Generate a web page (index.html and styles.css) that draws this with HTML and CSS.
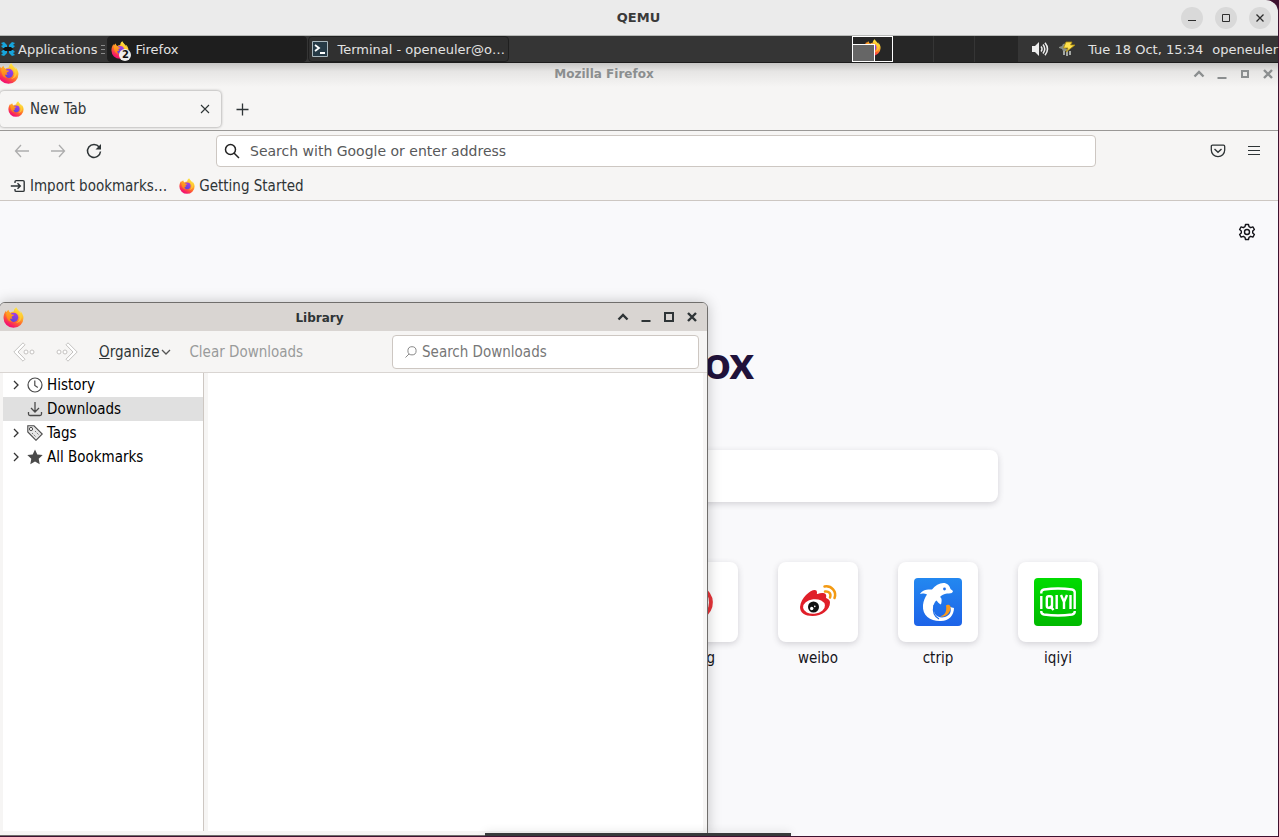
FILE: index.html
```html
<!DOCTYPE html>
<html lang="en">
<head>
<meta charset="utf-8">
<title>QEMU</title>
<link rel="stylesheet" href="styles.css">
</head>
<body>
<svg class="defs" aria-hidden="true">
  <defs>
    <linearGradient id="flame" x1="0.85" y1="0.05" x2="0.3" y2="1">
      <stop offset="0" stop-color="#fff44f"/><stop offset="0.3" stop-color="#ffc02a"/>
      <stop offset="0.6" stop-color="#ff6a2c"/><stop offset="0.9" stop-color="#f5156c"/>
    </linearGradient>
    <linearGradient id="globe" x1="0.7" y1="0" x2="0.3" y2="1">
      <stop offset="0" stop-color="#a83be8"/><stop offset="1" stop-color="#5a45d8"/>
    </linearGradient>
    <linearGradient id="ear" x1="0" y1="0" x2="0" y2="1">
      <stop offset="0" stop-color="#ffa51f"/><stop offset="1" stop-color="#ff7a1c"/>
    </linearGradient>
    <linearGradient id="blue" x1="0" y1="0" x2="0" y2="1">
      <stop offset="0" stop-color="#2388f0"/><stop offset="1" stop-color="#1d63e8"/>
    </linearGradient>
    <linearGradient id="green" x1="0" y1="0" x2="0" y2="1">
      <stop offset="0" stop-color="#00dc00"/><stop offset="1" stop-color="#00b900"/>
    </linearGradient>
    <symbol id="fox" viewBox="0 0 24 24">
      <path fill="url(#flame)" d="M22.3 8.2C21.7 6.7 20.4 5.300 19.500 4.700C20.200 6 20.500 7 20.600 7.800C19 4.400 16.400 3.500 15.200.4C13.200 1.700 12.300 3.800 12.300 5.200C10.600 5.300 9.400 5.900 8.600 6.600C7.500 6.200 6.700 5 6.300 3.200C5.300 3.800 4.500 4.800 4 5.900C3.600 5.500 3.500 4.600 3.500 4C1.500 6.500.6 9.600.6 12.600A11.400 11.200 0 0 0 23.400 12.600C23.500 11 23 9.500 22.300 8.200Z"/>
      <circle cx="12.200" cy="11.800" r="5.200" fill="url(#globe)"/>
      <path fill="url(#ear)" d="M3.800 6.200C5.700 6 7.400 6.200 8.600 7C9.300 8.500 10.800 8.400 12.600 8.800C12.400 10.200 10.200 10.200 9.900 11.100C9.700 12 10.300 12.700 11 12.900C9.800 13.700 8.600 13.600 8 13.200C8.200 14.800 9 15.900 10.500 16.800C7.500 17 5.800 15.600 5.300 14C4 11.500 3.500 9 3.800 6.200Z"/>
      <path fill="#ffd33a" fill-opacity=".75" d="M15.200 1C15.400 5 18.600 6.500 19 11C19.300 15 16.700 17.500 14.500 18.200C20 18 22.800 12.800 20.600 8C19 5.300 16.800 4 15.200 1Z"/>
    </symbol>
    <symbol id="shade" viewBox="0 0 12 12"><path d="M1.500 8.500 6 4l4.500 4.500" fill="none" stroke="currentColor" stroke-width="2.400"/></symbol>
    <symbol id="min" viewBox="0 0 12 12"><path d="M1.500 10h9" stroke="currentColor" stroke-width="2"/></symbol>
    <symbol id="max" viewBox="0 0 12 12"><path d="M2 2h8v8H2z" fill="none" stroke="currentColor" stroke-width="2"/></symbol>
    <symbol id="close" viewBox="0 0 12 12"><path d="M2 2l8 8M10 2l-8 8" stroke="currentColor" stroke-width="2.400"/></symbol>
    <symbol id="chev" viewBox="0 0 10 10"><path d="M3 1l4 4-4 4" fill="none" stroke="currentColor" stroke-width="1.300"/></symbol>
  </defs>
</svg>

<main class="vm">
  <header class="vm-title">
    <h1>QEMU</h1>
    <div class="vm-buttons">
      <button aria-label="Minimize"><svg viewBox="0 0 22 22"><path d="M7 13.500h8" stroke="#2e2e2e"/></svg></button>
      <button aria-label="Maximize"><svg viewBox="0 0 22 22"><path d="M7.500 7.500h7v7h-7z" fill="none" stroke="#2e2e2e"/></svg></button>
      <button aria-label="Close"><svg viewBox="0 0 22 22"><path d="M7.500 7.500l7 7M14.500 7.500l-7 7" stroke="#2e2e2e" stroke-width="1.300"/></svg></button>
    </div>
  </header>

  <nav class="panel" aria-label="Panel">
    <button class="apps">
      <svg width="16" height="16" viewBox="0 0 16 16"><path fill="#16a5dc" d="M1 2l3-1 3 3v3H3L1 5l2-1zM15 2l-3-1-3 3v3h4l2-2-2-1zM1 14l3 1 3-3V9H3l-2 2 2 1zM15 14l-3 1-3-3V9h4l2 2-2 1z"/><path fill="#111" d="M5 6h6l2 2-2 2H5L3 8z"/></svg>
      <span>Applications</span>
    </button>
    <svg class="grip" width="4" height="9" viewBox="0 0 4 9"><path d="M0 .5h4M0 4.500h4M0 8.500h4" stroke="#8a8a8a"/></svg>
    <button class="task task-active">
      <span class="task-icon"><svg width="18" height="18"><use href="#fox"/></svg><b class="count">2</b></span>
      <span>Firefox</span>
    </button>
    <button class="task">
      <svg width="16" height="16" viewBox="0 0 16 16"><path d="M.5.500h15v15H.5z" fill="#263a46" stroke="#a9b7bd"/><path d="M3 4l4 3-4 3M8 12h5" fill="none" stroke="#fff" stroke-width="1.800"/></svg>
      <span>Terminal - openeuler@o…</span>
    </button>
    <div class="pager">
      <button class="cell cell-on" aria-label="Workspace 1">
        <svg class="cell-fox" width="17" height="17"><use href="#fox"/></svg>
        <span class="mini"></span>
      </button>
      <button class="cell" aria-label="Workspace 2"></button>
      <button class="cell" aria-label="Workspace 3"></button>
      <button class="cell" aria-label="Workspace 4"></button>
    </div>
    <div class="tray">
      <svg width="18" height="16" viewBox="0 0 18 16"><path fill="#eee" d="M1 5h3l4-4v14l-4-4H1z"/><path d="M10 5.500q2 2.500 0 5M12 3.500q3.500 4.500 0 9M14 1.800q5 6.200 0 12.400" fill="none" stroke="#eee" stroke-width="1.500"/></svg>
      <svg width="18" height="16" viewBox="0 0 18 16"><path d="M1 6l3-1 1-2 4-1-2 5 2 1v2H5L4 8 1 7z" fill="#8a9088"/><path d="M6 10v4M9 10v5M12 10v4" stroke="#c9cdc7" stroke-width="1.500"/><path d="M8 1h6l-1.500 3H17l-9 7 2-4H5.500z" fill="#ffe14d" stroke="#a98a10" stroke-width=".8"/></svg>
      <time>Tue 18 Oct, 15:34</time>
      <span class="user">openeuler</span>
    </div>
  </nav>

  <section class="desktop">
    <section class="browser" aria-label="Mozilla Firefox">
      <header class="browser-title">
        <svg class="browser-fox" width="21" height="21"><use href="#fox"/></svg>
        <h2>Mozilla Firefox</h2>
        <div class="win-buttons">
          <button aria-label="Shade"><svg><use href="#shade"/></svg></button>
          <button aria-label="Minimize"><svg><use href="#min"/></svg></button>
          <button aria-label="Maximize"><svg viewBox="0 0 12 12"><path d="M3 3h6v6H3z" fill="none" stroke="currentColor" stroke-width="2"/></svg></button>
          <button aria-label="Close"><svg><use href="#close"/></svg></button>
        </div>
      </header>
      <div class="tabs">
        <div class="tab">
          <svg width="16" height="16"><use href="#fox"/></svg>
          <span>New Tab</span>
          <button aria-label="Close tab"><svg width="10" height="10" viewBox="0 0 10 10"><path d="M1 1l8 8M9 1l-8 8" stroke="#2e3436" stroke-width="1.100"/></svg></button>
        </div>
        <button class="new-tab" aria-label="New tab"><svg width="13" height="13" viewBox="0 0 13 13"><path d="M6.500.5v12M.5 6.500h12" stroke="#2e3436" stroke-width="1.300"/></svg></button>
      </div>
      <div class="nav">
        <div class="nav-buttons">
          <button aria-label="Back" disabled><svg width="16" height="16" viewBox="0 0 16 16"><path d="M7 2L1.500 8 7 14M1.500 8H15" fill="none" stroke="#adadad" stroke-width="1.300"/></svg></button>
          <button aria-label="Forward" disabled><svg width="16" height="16" viewBox="0 0 16 16"><path d="M9 2l5.500 6L9 14M14.500 8H1" fill="none" stroke="#adadad" stroke-width="1.300"/></svg></button>
          <button aria-label="Reload"><svg width="16" height="16" viewBox="0 0 16 16"><path d="M13.200 4A6.500 6.500 0 1 0 14.500 8.500" fill="none" stroke="#2e3436" stroke-width="1.500"/><path d="M15 1v5.500H9.500z" fill="#2e3436"/></svg></button>
        </div>
        <label class="url">
          <svg width="16" height="16" viewBox="0 0 16 16"><circle cx="6.500" cy="6.500" r="5" fill="none" stroke="#222" stroke-width="1.500"/><path d="M10 10l5 5" stroke="#222" stroke-width="1.500"/></svg>
          <input type="text" aria-label="Address" placeholder="Search with Google or enter address">
        </label>
        <div class="nav-tools">
          <button aria-label="Save to Pocket"><svg width="16" height="16" viewBox="0 0 16 16"><path d="M2.500 2.200h11q1.200 0 1.200 1.200V7A6.700 6.700 0 0 1 1.300 7V3.400q0-1.200 1.200-1.200z" fill="none" stroke="#2e3436" stroke-width="1.300"/><path d="M4.500 6L8 9.300 11.500 6" fill="none" stroke="#2e3436" stroke-width="1.400"/></svg></button>
          <button aria-label="Menu"><svg width="16" height="16" viewBox="0 0 16 16"><path d="M2 3.500h12M2 7.500h12M2 11.500h12" stroke="#2e3436" stroke-width="1.200"/></svg></button>
        </div>
      </div>
      <div class="bookmarks">
        <a href="#import"><svg width="16" height="16" viewBox="0 0 16 16"><path d="M5 5V3.800q0-1.200 1.200-1.200h6.800q1.200 0 1.200 1.200v8.400q0 1.200-1.200 1.200H6.200Q5 13.400 5 12.200V11M.8 8H10M7.500 5.200L10.300 8 7.500 10.800" fill="none" stroke="#2e3436" stroke-width="1.400"/></svg>Import bookmarks…</a>
        <a href="#start"><svg width="16" height="16"><use href="#fox"/></svg>Getting Started</a>
      </div>
      <div class="page">
        <button class="gear" aria-label="Personalize new tab"><svg width="18" height="18" viewBox="0 0 18 18"><g fill="none" stroke="#15141a" stroke-width="1.400" stroke-linejoin="round"><path d="M7.500 1.500h3l.5 2.200 1.700 1 2.200-.8 1.500 2.600-1.700 1.500v2l1.700 1.500-1.500 2.600-2.200-.8-1.700 1-.5 2.200h-3L7 14.300l-1.700-1-2.200.8-1.500-2.600L3.300 10V8L1.600 6.500l1.500-2.600 2.200.8 1.700-1z"/><circle cx="9" cy="9" r="2.500"/></g></svg></button>
        <div class="brand">Firefox</div>
        <input class="page-search" type="search" aria-label="Search the Web">
        <div class="sites">
          <a class="site" href="#ifeng"><span class="tile"><svg width="48" height="48" viewBox="0 0 48 48"><path d="M24 10c16 2 16 26 0 31M23 14c11 4 11 20 2 26M28 9c13 8 13 22 1 31M22 19c6 4 6 13 1 19M14 14q-8 12 4 24" fill="none" stroke="#e8353a" stroke-width="2"/></svg></span>ifeng</a>
          <a class="site" href="#weibo"><span class="tile"><svg width="48" height="48" viewBox="0 0 48 48"><path fill="#e01f29" d="M12 17c5-5 11-7 11-2.500 0 1-.5 1.500.5 1.500 5-2 10-1 8.500 3.500-.2 1 4 1 4 5C36 32 28 38 18.500 38 11 38 6 35 6 29c.5-5 3-9 6-12z"/><ellipse cx="20" cy="28.500" rx="11" ry="7.200" fill="#fff" transform="rotate(-6 20 28.500)"/><circle cx="19.500" cy="29" r="5.500" fill="#111"/><circle cx="17.700" cy="30.500" r="1.700" fill="#fff"/><circle cx="20.800" cy="28.400" r=".8" fill="#fff"/><path d="M30.500 8.500c7-1.200 12.500 5 10 11.500M31 13.500c4-.5 6.500 2 5 6" fill="none" stroke="#f39a13" stroke-width="2.500" stroke-linecap="round"/></svg></span>weibo</a>
          <a class="site" href="#ctrip"><span class="tile"><svg width="48" height="48" viewBox="0 0 48 48"><rect width="48" height="48" rx="4" fill="url(#blue)"/><path fill="#fff" d="M6 16C8 12 13 11 18 11.500C22 7 27 4 32 5.500C35 6.500 36 9 36.500 11L39 13C38.500 15.500 36 15.500 33 15.500C30 16 27.500 17 26 19C28 20 28 23 27 26.500C25 25.500 23.500 24 22.500 22.500C19 25 18.500 31 21 36C23 39 27 40 31 39C36 37.500 38 33 36 29L40 30C40 37 35 43 27 43C17 43.500 8 38 9 27C9.500 23 11 19 13 16.500C11 15.500 8 15 6 16Z"/><circle cx="30.500" cy="11" r="1.400" fill="#1d6de9"/><path d="M20 27c-1.500 7 1 12 5 14" fill="none" stroke="#1d6de9" stroke-width="1.300"/><path fill="#f8991d" d="M32 27.500c1-1.500 4-1 4.500 1 .5 6-4 11-10.500 10 5-1.500 7-5 6-11z"/></svg></span>ctrip</a>
          <a class="site" href="#iqiyi"><span class="tile"><svg width="48" height="48" viewBox="0 0 48 48"><rect width="48" height="48" rx="4" fill="url(#green)"/><g fill="none" stroke="#fff" stroke-width="2.400"><path d="M7.300 15.500V14q.3-2 2.700-2.500 14-2 28 0 2.400.5 2.700 2.500V31M7.300 33v1q.3 2 2.700 2.500 14 2 28 0 2.400-.5 2.700-2.500v-1M7.300 18v13"/><rect x="12.800" y="18.200" width="5.200" height="11.600" rx="1.800"/><path d="M16 28l3.500 4M22.700 17v14M27 17l3 7 3-7M30 23v8M36.500 17v14"/></g></svg></span>iqiyi</a>
        </div>
      </div>
    </section>

    <section class="library" aria-label="Library">
      <header class="library-title">
        <svg width="21" height="21"><use href="#fox"/></svg>
        <h2>Library</h2>
        <div class="win-buttons">
          <button aria-label="Shade"><svg><use href="#shade"/></svg></button>
          <button aria-label="Minimize"><svg><use href="#min"/></svg></button>
          <button aria-label="Maximize"><svg><use href="#max"/></svg></button>
          <button aria-label="Close"><svg><use href="#close"/></svg></button>
        </div>
      </header>
      <div class="library-tools">
        <button class="step" aria-label="Back" disabled><svg width="22" height="20" viewBox="0 0 22 20"><g fill="#fff" stroke="#c4c2c0"><path d="M10 .8L.8 10l9.200 9.200 2-2L5 10l7-7.200z"/><circle cx="13" cy="10" r="2"/><circle cx="19" cy="10" r="2"/></g></svg></button>
        <button class="step" aria-label="Forward" disabled><svg width="22" height="20" viewBox="0 0 22 20"><g fill="#fff" stroke="#c4c2c0"><path d="M12 .8l9.200 9.200-9.200 9.200-2-2 7-7.200-7-7.200z"/><circle cx="9" cy="10" r="2"/><circle cx="3" cy="10" r="2"/></g></svg></button>
        <button class="organize"><span><u>O</u>rganize</span><svg width="10" height="10" viewBox="0 0 10 10"><path d="M1 3l4 4 4-4" fill="none" stroke="#555" stroke-width="1.300"/></svg></button>
        <button class="clear" disabled>Clear Downloads</button>
        <label class="find">
          <svg width="12" height="12" viewBox="0 0 12 12"><circle cx="7" cy="4.800" r="4.100" fill="none" stroke="#8a8a8a"/><path d="M4 8L.5 11.500" stroke="#8a8a8a"/></svg>
          <input type="text" aria-label="Search Downloads" placeholder="Search Downloads">
        </label>
      </div>
      <div class="library-body">
        <ul class="tree">
          <li><svg class="twist"><use href="#chev"/></svg><svg width="16" height="16" viewBox="0 0 16 16"><circle cx="8" cy="8" r="7" fill="none" stroke="#4a4a4a" stroke-width="1.200"/><path d="M7.800 3.500V8.500l3 2" fill="none" stroke="#4a4a4a" stroke-width="1.200"/></svg>History</li>
          <li class="selected"><span class="twist"></span><svg width="16" height="16" viewBox="0 0 16 16"><path d="M8 1v10M4 7l4 4 4-4M1.500 11v2q0 1.500 1.500 1.500h10q1.500 0 1.500-1.500v-2" fill="none" stroke="#4a4a4a" stroke-width="1.300"/></svg>Downloads</li>
          <li><svg class="twist"><use href="#chev"/></svg><svg width="16" height="16" viewBox="0 0 16 16"><path d="M.8.800H7L15.300 9 9 15.300.8 7z" fill="#e6e6e6" stroke="#4a4a4a" stroke-width="1.100"/><circle cx="4" cy="4" r="1.600" fill="#fff" stroke="#4a4a4a"/><path d="M5 8l4 4M8 6l4 4" stroke="#777" stroke-dasharray="1.500 1"/></svg>Tags</li>
          <li><svg class="twist"><use href="#chev"/></svg><svg width="16" height="16" viewBox="0 0 16 16"><path d="M8 .5l2.300 4.900 5.400.7-4 3.700 1 5.400L8 12.600l-4.700 2.600 1-5.400-4-3.700 5.400-.7z" fill="#4a4a4a"/></svg>All Bookmarks</li>
        </ul>
        <div class="list"></div>
      </div>
    </section>
    <div class="dock"></div>
  </section>
</main>
</body>
</html>
```
FILE: styles.css
```css
* { box-sizing: border-box; }

body {
  margin: 0;
  height: 100vh;
  padding: 0 1px 1px 0;
  background: #3f1230;
  color: #2e3436;
  font: 13px/16px "DejaVu Sans", sans-serif;
  overflow: hidden;
}

h1, h2, ul { margin: 0; padding: 0; }
svg { display: block; flex: none; }
button, input { font: inherit; color: inherit; }
button {
  display: flex;
  align-items: center;
  justify-content: center;
  padding: 0;
  border: 0;
  background: none;
}
input { outline: 0; }
a { color: inherit; text-decoration: none; }
.defs { position: absolute; width: 0; height: 0; }

.vm {
  height: 100%;
  display: flex;
  flex-direction: column;
}

.vm-title {
  display: grid;
  grid-template-columns: 1fr auto 1fr;
  align-items: center;
  height: 36px;
  padding-right: 7px;
  background: #ebebeb;
  border-bottom: 1px solid #b8bab8;
  border-radius: 0 12px 0 0;
}
.vm-title h1 {
  grid-column: 2;
  padding-left: 6px;
  font-size: 13px;
  line-height: 18px;
  color: #3a3a3a;
}
.vm-buttons {
  display: flex;
  justify-content: flex-end;
  gap: 12px;
}
.vm-buttons button {
  width: 22px;
  height: 22px;
  border-radius: 50%;
  background: #d9d9d9;
}
.vm-buttons svg { width: 22px; height: 22px; }

.panel {
  display: flex;
  align-items: center;
  height: 27px;
  background: #353535;
  border-bottom: 1px solid #1c1c1c;
  color: #e2e2e2;
  line-height: 18px;
}
.apps { gap: 2px; }
.grip { margin: 0 2px 0 4px; }
.panel span, .panel time { padding-top: 1px; }
.task {
  justify-content: flex-start;
  flex: 0 1 200px;
  height: 26px;
  padding: 0 3px;
  gap: 9px;
  background: #303030;
  border: 1px solid #1f1f1f;
  border-radius: 4px;
  white-space: nowrap;
}
.task-active { background: #1e1e1e; gap: 6px; margin-right: 1px; }
.task-icon { position: relative; }
.count {
  position: absolute;
  left: 8px;
  top: 9px;
  width: 12px;
  height: 12px;
  border-radius: 50%;
  background: #eee;
  color: #111;
  font-size: 10px;
  line-height: 12px;
}
.pager {
  display: grid;
  grid-template-columns: 41px 41px 41px 43px;
  height: 26px;
  margin-left: auto;
  background: #262626;
}
.cell {
  height: 26px;
  border-right: 1px solid #353535;
}
.cell:last-child { border-right: 0; }
.cell-on {
  position: relative;
  border: 1px solid #fff;
}
.cell-fox { margin-top: -3px; }
.mini {
  position: absolute;
  left: 0;
  bottom: 0;
  width: 22px;
  height: 17px;
  background: #666;
  border: solid #fff;
  border-width: 1px 1px 0 0;
}
.tray {
  display: flex;
  align-items: center;
  gap: 9px;
  padding: 0 0 0 13px;
  white-space: nowrap;
}
.tray time { margin-left: 3px; }

.desktop {
  position: relative;
  flex: 1;
  min-height: 0;
  overflow: hidden;
}

.browser {
  display: flex;
  flex-direction: column;
  height: 100%;
  background: #f6f5f4;
  font: 15px/18px "DejaVu Sans Condensed", "DejaVu Sans", sans-serif;
}
.browser-title {
  display: grid;
  grid-template-columns: 1fr auto 1fr;
  align-items: center;
  height: 24px;
  padding: 0 4px 3px 0;
  background: linear-gradient(#c6c5c4, #e6e5e4 35%, #f6f5f4);
  color: #8b8e8f;
}
.browser-title h2 { padding-right: 66px; }
.browser-title h2, .library-title h2 {
  font: bold 12px/16px "DejaVu Sans", sans-serif;
}
.browser-fox { margin-left: -2px; }
.win-buttons {
  display: flex;
  justify-content: flex-end;
  gap: 11px;
}
.win-buttons svg { width: 12px; height: 12px; }

.tabs {
  display: flex;
  align-items: center;
  height: 44px;
  border-bottom: 1px solid #9a9896;
}
.tab {
  display: flex;
  align-items: center;
  gap: 6px;
  width: 221px;
  height: 36px;
  padding: 0 11px 0 8px;
  border-radius: 4px;
  box-shadow: 0 0 3px rgba(0, 0, 0, .45);
}
.tab button { margin-left: auto; }
.new-tab { margin-left: 15px; padding-top: 2px; }

.nav {
  display: grid;
  grid-template-columns: 216px minmax(200px, 880px) 1fr;
  align-items: center;
  height: 40px;
}
.nav-buttons, .nav-tools { display: flex; gap: 20px; }
.nav-buttons { padding-left: 14px; }
.nav-tools { justify-content: flex-end; padding-right: 16px; }
.url, .find {
  display: flex;
  align-items: center;
  background: #fff;
  border: 1px solid #cdc7c2;
  border-radius: 4px;
}
.url {
  height: 32px;
  padding: 0 7px;
  gap: 10px;
  font: 14px/18px "DejaVu Sans", sans-serif;
}
.url input, .find input {
  flex: 1;
  min-width: 0;
  padding: 0;
  border: 0;
  background: none;
}
.url input::placeholder { color: #58595a; opacity: 1; }
.find input::placeholder { color: #777; opacity: 1; }

.bookmarks {
  display: flex;
  align-items: center;
  gap: 12px;
  height: 30px;
  padding: 0 10px;
  border-bottom: 1px solid #cdc7c2;
}
.bookmarks a { display: flex; align-items: center; gap: 4px; }

.page {
  flex: 1;
  min-height: 0;
  display: flex;
  flex-direction: column;
  align-items: center;
  padding-right: 2px;
  overflow: hidden;
  background: #f9f9fb;
  color: #15141a;
}
.gear { align-self: flex-end; margin: 22px 20px 0 0; }
.brand {
  width: 232px;
  margin-top: 97px;
  text-align: right;
  font: 900 46px/48px Lato, sans-serif;
  color: #20123a;
}
.page-search {
  width: 720px;
  max-width: 90%;
  height: 52px;
  margin-top: 64px;
  border: 0;
  border-radius: 8px;
  background: #fff;
  box-shadow: 0 2px 6px rgba(58, 57, 68, .2);
}
.sites {
  display: flex;
  justify-content: flex-end;
  gap: 40px;
  width: 920px;
  max-width: 100%;
  margin-top: 60px;
}
.site { width: 80px; text-align: center; }
.tile {
  display: grid;
  place-items: center;
  height: 80px;
  margin-bottom: 7px;
  border-radius: 8px;
  background: #fff;
  box-shadow: 0 2px 6px rgba(58, 57, 68, .2);
}

.library {
  position: absolute;
  left: -1px;
  top: 239px;
  bottom: 0;
  width: 709px;
  display: flex;
  flex-direction: column;
  background: #f6f5f4;
  border: 1px solid #706e6c;
  border-radius: 6px 6px 0 0;
  box-shadow: 0 0 14px rgba(0, 0, 0, .22);
  font: 15px/18px "DejaVu Sans Condensed", "DejaVu Sans", sans-serif;
}
.library-title {
  display: grid;
  grid-template-columns: 1fr auto 1fr;
  align-items: center;
  height: 28px;
  padding: 0 9px 0 3px;
  background: #d9d5d2;
  border-radius: 5px 5px 0 0;
}
.library-title h2 { padding: 1px 62px 0 0; }
.library-tools {
  display: flex;
  align-items: center;
  height: 42px;
  padding: 0 8px 0 13px;
  border-bottom: 1px solid #d9d5d2;
}
.step { margin-right: 21px; }
.organize { gap: 2px; margin-right: 18px; }
.clear { color: #999b9b; }
.find {
  width: 307px;
  height: 34px;
  margin-left: auto;
  padding: 0 12px;
  gap: 5px;
}
.library-body {
  flex: 1;
  display: grid;
  grid-template-columns: 201px 1fr;
  gap: 4px;
  padding: 0 4px 4px 3px;
}
.tree {
  list-style: none;
  background: #fff;
  border-right: 1px solid #cdc7c2;
  color: #000;
}
.tree li {
  display: flex;
  align-items: center;
  gap: 4px;
  height: 24px;
  padding-left: 8px;
}
.tree .twist { width: 10px; height: 10px; margin-right: 2px; color: #333; }
.tree .selected { background: #e0e0e0; }
.list { background: #fff; }

.dock {
  position: absolute;
  left: 485px;
  bottom: 0;
  width: 306px;
  height: 3px;
  background: #383a3b;
  box-shadow: 0 0 10px rgba(0, 0, 0, .2);
}
```
